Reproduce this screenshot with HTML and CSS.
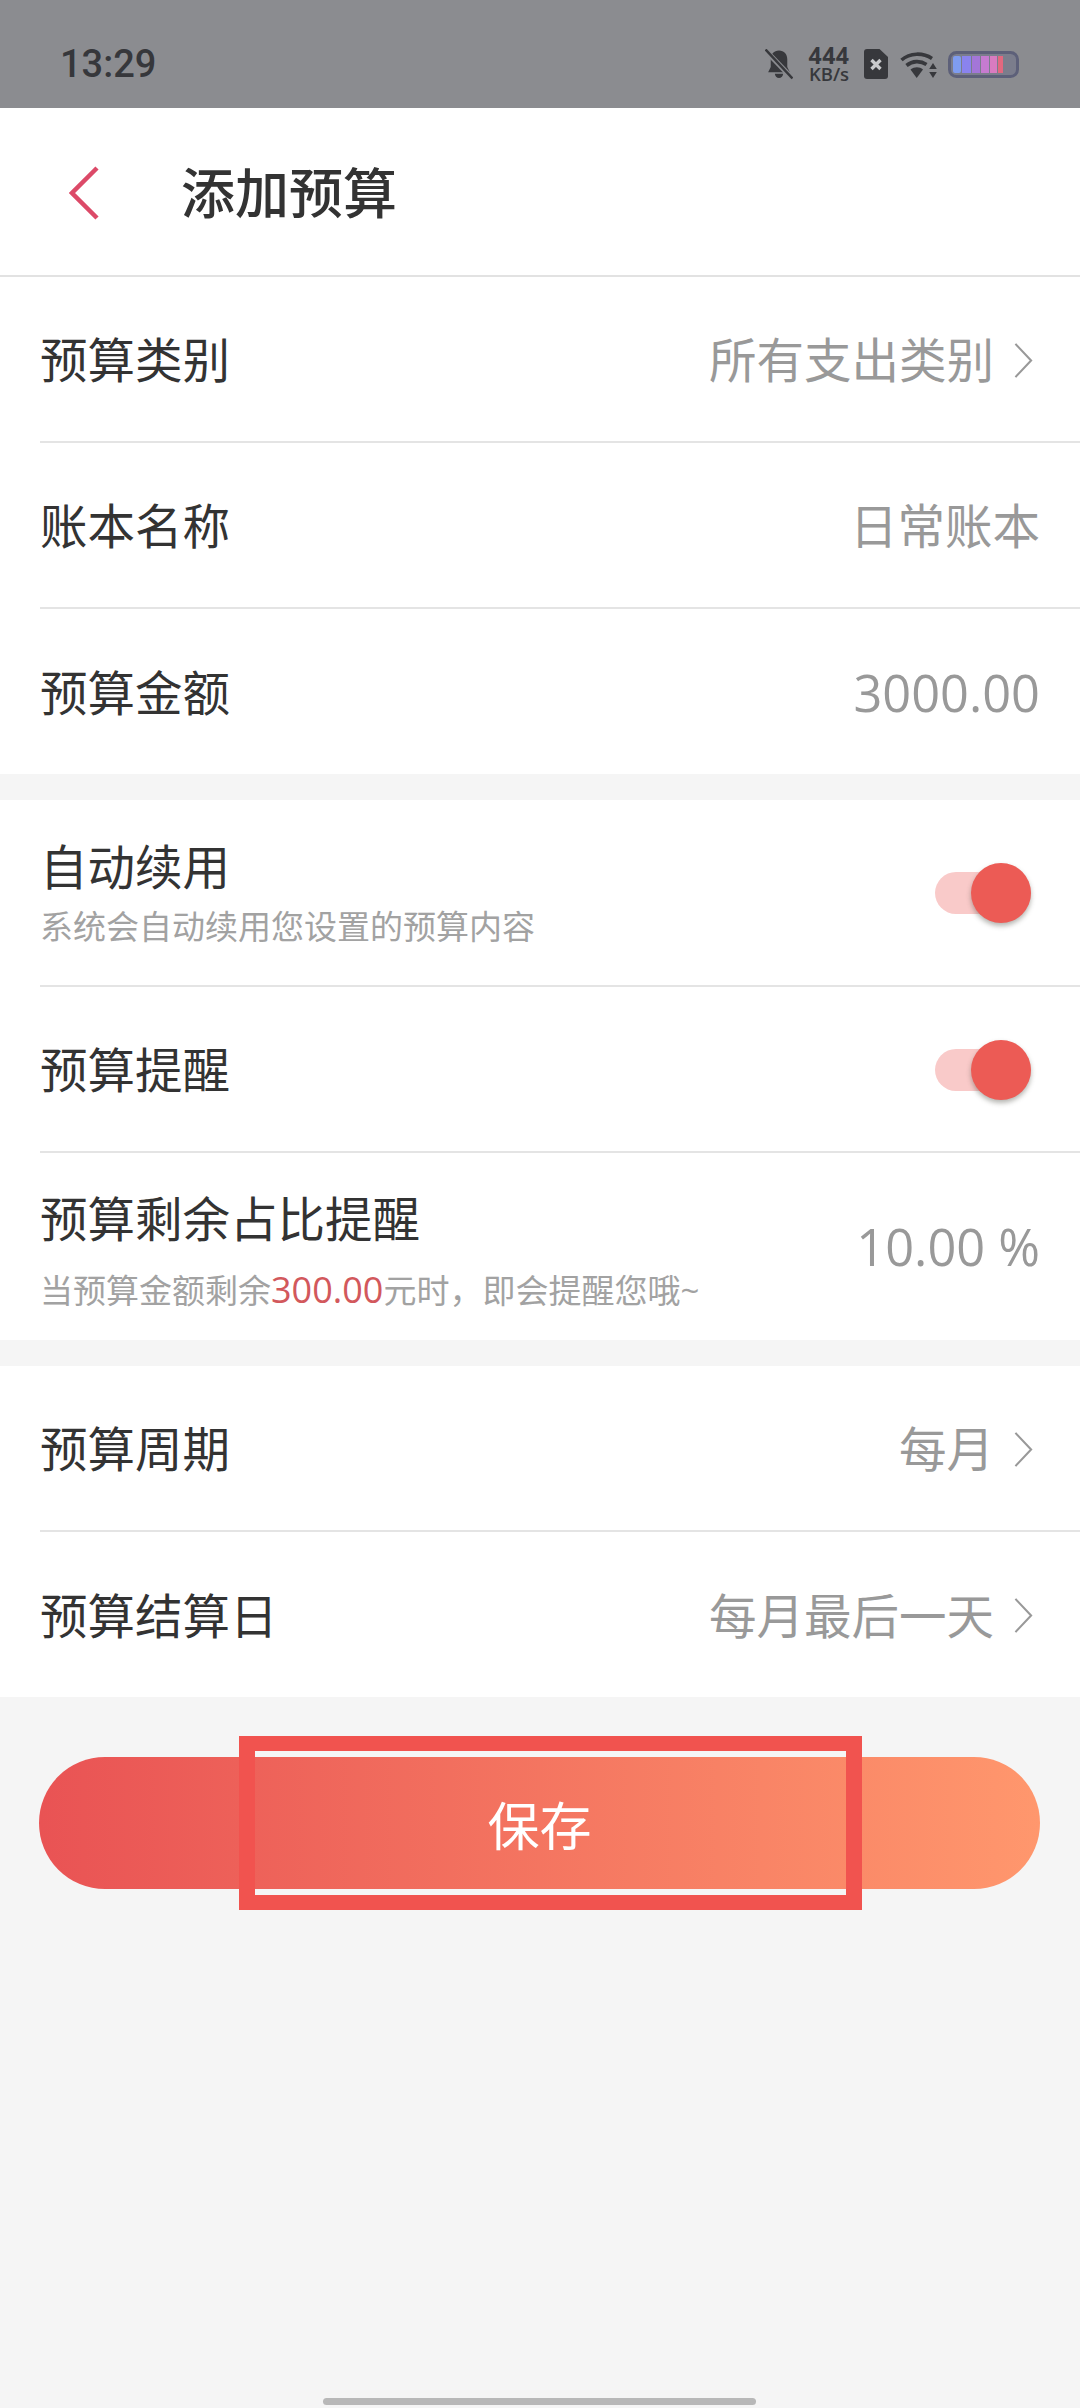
FILE: index.html
```html
<!DOCTYPE html>
<html lang="zh-CN">
<head>
<meta charset="utf-8">
<title>添加预算</title>
<link rel="stylesheet" href="styles.css">
</head>
<body>
<div class="page">
  <div class="status">
    <span class="time">13:29</span>
    <div class="status-icons">
      <svg class="ic-bell" viewBox="0 0 27 30"><path d="M13.5 1.5c-5 0-8 3.6-8 8.5v7.5L3 22.500h21l-2.500-5V10c0-4.900-3-8.500-8-8.500z" fill="#37383c"/><path d="M9.500 24a4 4 0 0 0 8 0z" fill="#37383c"/><path d="M0.500 1.500 26.500 28.500" stroke="#8b8c90" stroke-width="5"/><path d="M0.500 0.500 26.500 28.500" stroke="#37383c" stroke-width="2.400"/></svg>
      <div class="speed"><span class="speed-num">444</span><span class="speed-unit">KB/s</span></div>
      <svg class="ic-sim" viewBox="0 0 24 30"><path d="M3 0h12.500L24 8v19a3 3 0 0 1-3 3H3a3 3 0 0 1-3-3V3a3 3 0 0 1 3-3z" fill="#37383c"/><path d="M7.500 11l9 9M16.500 11l-9 9" stroke="#c9cacc" stroke-width="3.400"/></svg>
      <svg class="ic-wifi" viewBox="0 0 37 29"><g fill="none" stroke="#37383c" stroke-width="3.600"><path d="M1.500 10C10 2.500 23 2.500 32 8.500"/><path d="M6.500 15.500C12.500 10.500 20.500 10.500 26.500 14.500"/></g><path d="M10.500 19.500c4-3 9-3 12.500 0l-6.300 8.500z" fill="#37383c"/><path d="M33 13l3.800 6h-7.600zM29.200 22h7.600L33 28z" fill="#37383c"/></svg>
      <svg class="ic-batt" viewBox="0 0 71 27"><rect x="1.500" y="1.500" width="68" height="24" rx="7" fill="#7b7d8c" stroke="#5d6079" stroke-width="3"/><rect x="5" y="5" width="8" height="17" rx="2" fill="#7f9cf0"/><rect x="14" y="5" width="9" height="17" fill="#8a83ee"/><rect x="24" y="5" width="8" height="17" fill="#a376d8"/><rect x="33" y="5" width="8" height="17" fill="#c67bd0"/><rect x="42" y="5" width="7" height="17" fill="#d97bc0"/><rect x="50" y="5" width="5" height="17" fill="#e2687f"/></svg>
    </div>
  </div>

  <header class="topbar">
    <svg class="back" viewBox="0 0 30 54"><path d="M28 2 3 27l25 25" fill="none" stroke="#dc4a68" stroke-width="4.500"/></svg>
    <h1 class="title">添加预算</h1>
  </header>

  <section class="group">
    <div class="row"><span class="label">预算类别</span><span class="value">所有支出类别<svg class="chev" viewBox="0 0 20 38"><path d="M1.500 1.500 18 19 1.500 36.500" fill="none" stroke="#999" stroke-width="2.200"/></svg></span></div>
    <div class="row"><span class="label">账本名称</span><span class="value">日常账本</span></div>
    <div class="row row-last row-short"><span class="label">预算金额</span><span class="value num">3000.00</span></div>
  </section>

  <section class="group">
    <div class="row row-auto">
      <div class="stack"><span class="label">自动续用</span><span class="sub">系统会自动续用您设置的预算内容</span></div>
      <div class="switch"><span class="thumb"></span></div>
    </div>
    <div class="row"><span class="label">预算提醒</span><div class="switch"><span class="thumb"></span></div></div>
    <div class="row row-last row-ratio">
      <div class="stack"><span class="label">预算剩余占比提醒</span><span class="sub">当预算金额剩余<em class="hl">300.00</em>元时，即会提醒您哦~</span></div>
      <span class="value num">10.00 %</span>
    </div>
  </section>

  <section class="group">
    <div class="row"><span class="label">预算周期</span><span class="value">每月<svg class="chev" viewBox="0 0 20 38"><path d="M1.500 1.500 18 19 1.500 36.500" fill="none" stroke="#999" stroke-width="2.200"/></svg></span></div>
    <div class="row row-last row-short"><span class="label">预算结算日</span><span class="value">每月最后一天<svg class="chev" viewBox="0 0 20 38"><path d="M1.500 1.500 18 19 1.500 36.500" fill="none" stroke="#999" stroke-width="2.200"/></svg></span></div>
  </section>

  <div class="save">保存<span class="mark"></span></div>

  <div class="home"></div>
</div>
</body>
</html>
```

FILE: styles.css
```css
* { box-sizing: border-box; }
html, body { margin: 0; padding: 0; }
body {
  background: #f5f5f5;
  font-family: "Open Sans", "Noto Sans CJK SC", sans-serif;
  color: #333;
}
.page {
  width: 1080px;
  height: 2408px;
  display: flex;
  flex-direction: column;
  overflow: hidden;
}
.status {
  height: 108px;
  background: #8b8c90;
  display: flex;
  align-items: center;
  justify-content: space-between;
  padding: 20px 61px 0 60px;
  flex: none;
}
.time {
  font-family: Roboto, sans-serif;
  font-weight: 500;
  font-size: 38px;
  color: #36373b;
}
.status-icons {
  display: flex;
  align-items: center;
}
.ic-bell { width: 28px; height: 31px; margin-right: 14px; }
.speed {
  display: flex;
  flex-direction: column;
  align-items: center;
  width: 44px;
  font-family: "Open Sans", sans-serif;
  font-weight: 700;
  color: #37383c;
  margin-right: 13px;
}
.speed-num { font-size: 23px; line-height: 20px; letter-spacing: .5px; }
.speed-unit { font-size: 18.5px; line-height: 18px; font-weight: 600; white-space: nowrap; }
.ic-sim { width: 24px; height: 30px; margin-right: 12px; }
.ic-wifi { width: 37px; height: 29px; margin-right: 11px; }
.ic-batt { width: 71px; height: 27px; }

.topbar {
  height: 169px;
  flex: none;
  background: #fff;
  border-bottom: 2px solid #e2e2e2;
  display: flex;
  align-items: center;
  padding-left: 69px;
}
.back { width: 30px; height: 54px; margin-right: 82px; margin-top: 2px; }
.title {
  margin: 2px 0 0;
  font-size: 54px;
  font-weight: 500;
  color: #333;
  line-height: 1;
}
.group {
  background: #fff;
  padding-left: 40px;
  margin-bottom: 26px;
  flex: none;
}
.group:last-of-type { margin-bottom: 0; }
.row {
  height: 166px;
  padding-top: 2px;
  display: flex;
  align-items: center;
  justify-content: space-between;
  padding-right: 40px;
  border-bottom: 2px solid #e4e4e4;
}
.row-last { border-bottom: 0; }
.row-short { height: 165px; }
.row-auto { height: 187px; padding-top: 0; }
.row-ratio { height: 187px; padding-top: 0; }
.row-ratio .stack { padding-top: 8px; }
.label {
  font-size: 47.5px;
  line-height: 60px;
  color: #333;
  white-space: nowrap;
}
.value {
  font-size: 47.5px;
  line-height: 60px;
  color: #999;
  display: flex;
  align-items: center;
  white-space: pre;
}
.num { font-size: 50.5px; }
.chev { width: 19px; height: 37px; margin-left: 20px; margin-right: 7px; }
.stack { display: flex; flex-direction: column; }
.sub {
  font-size: 33px;
  line-height: 44px;
  color: #a2a2a2;
  margin-top: 8px;
}
.row-ratio .sub { margin-top: 19px; }
.hl {
  font-style: normal;
  font-size: 36px;
  color: #d2585c;
}
.switch {
  width: 96px;
  height: 42px;
  margin-right: 9px;
  border-radius: 21px;
  background: #f9cac9;
  display: flex;
  align-items: center;
  justify-content: flex-end;
}
.thumb {
  width: 60px;
  height: 60px;
  border-radius: 50%;
  background: #ec5b55;
  box-shadow: 0 3px 5px rgba(70, 70, 60, .4);
  flex: none;
}
.save {
  position: relative;
  margin: 60px 40px 0 39px;
  height: 132px;
  border-radius: 66px;
  background: linear-gradient(90deg, #e95354, #ff976d);
  color: #fff;
  font-size: 52px;
  display: flex;
  align-items: center;
  justify-content: center;
  flex: none;
}
.mark {
  position: absolute;
  left: 200px;
  top: -21px;
  width: 623px;
  height: 174px;
  border: solid #f1534f;
  border-width: 15px 16px;
}
.home {
  width: 433px;
  height: 7px;
  border-radius: 4px;
  background: #b8b8b8;
  margin: auto 0 3px 323px;
  flex: none;
}
```
